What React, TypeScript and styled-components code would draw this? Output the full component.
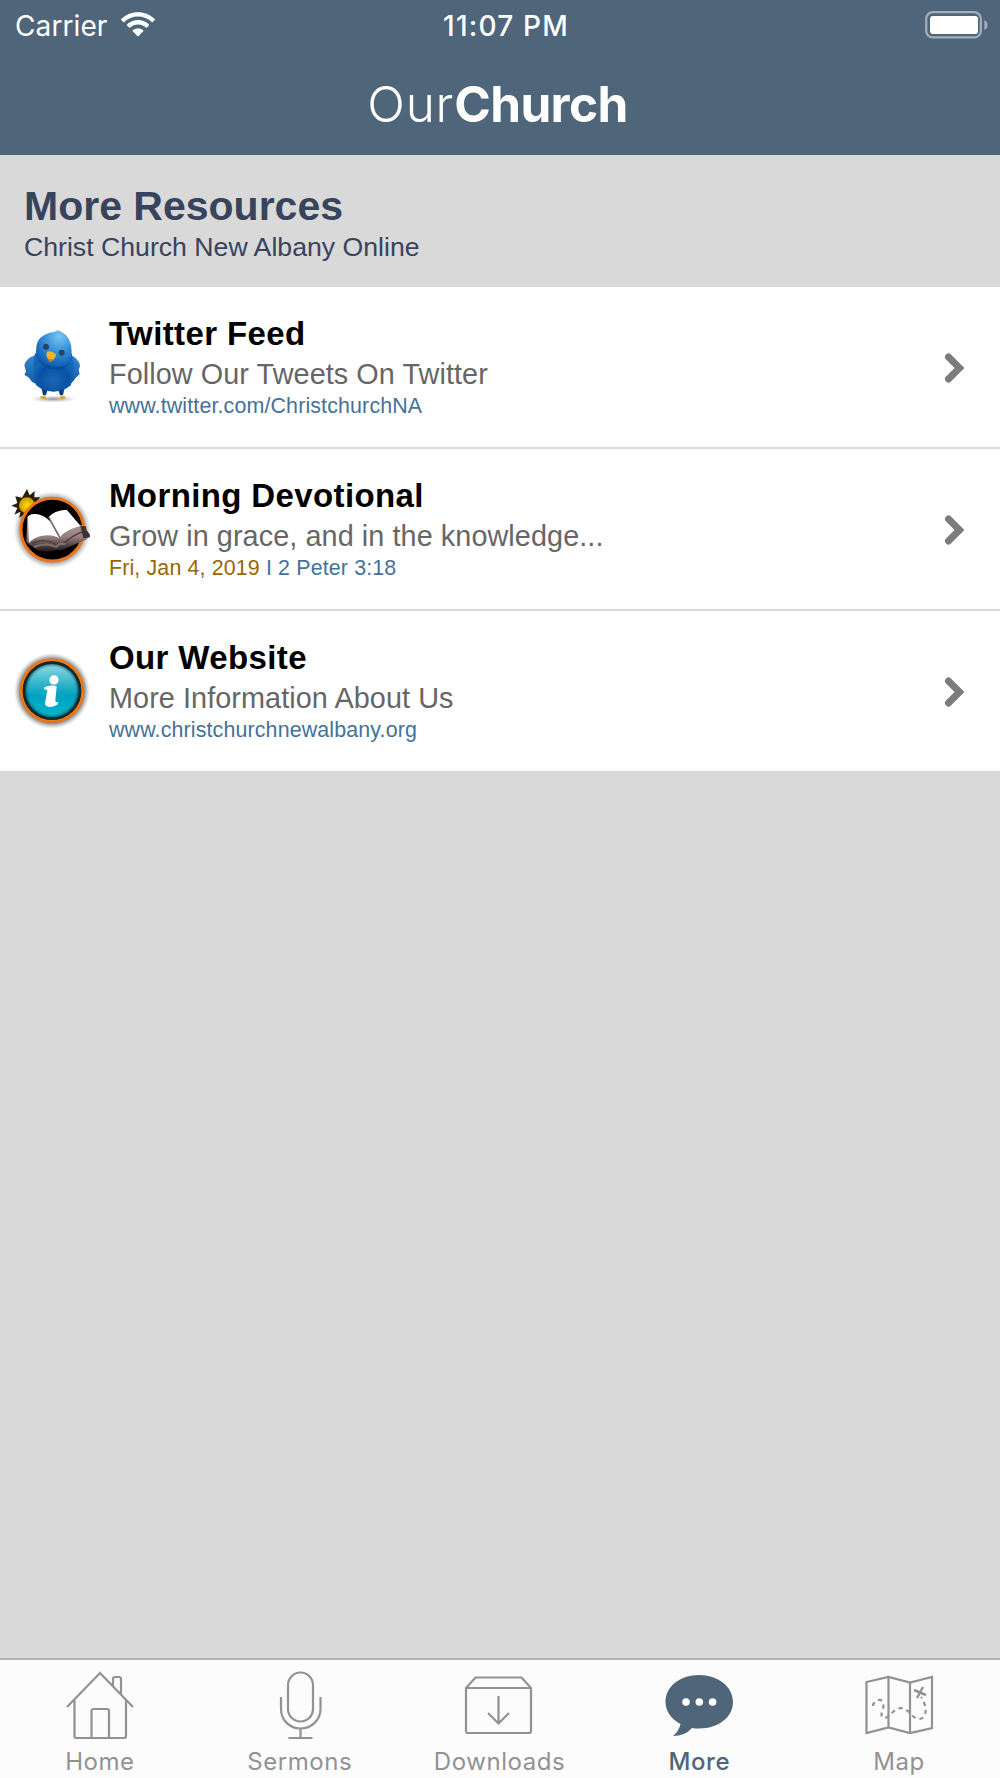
import React from 'react';
import styled, { createGlobalStyle } from 'styled-components';

const GlobalStyle = createGlobalStyle`
    * { box-sizing: border-box; }

    body {
        margin: 0;
        background: #d9d9d9;
        font-family: "Liberation Sans", Arial, sans-serif;
    }
`;

const Screen = styled.div`
    display: flex;
    flex-direction: column;
    width: 1000px;
    height: 1778px;
    background: #d9d9d9;
`;

const Header = styled.header`
    height: 155px;
    background: #4f657a;
    color: #fff;
`;

const StatusBar = styled.div`
    display: grid;
    grid-template-columns: 1fr auto 1fr;
    align-items: center;
    height: 52px;
    padding: 0 12px 0 15px;
    font-family: Inter, sans-serif;
    font-size: 28px;
    line-height: 52px;
`;

const Carrier = styled.div`
    display: flex;
    align-items: center;
    gap: 14px;
    letter-spacing: 0.1px;

    svg { margin-bottom: 3px; }
`;

const Clock = styled.div`
    font-weight: 500;
    letter-spacing: 1.2px;
    padding-left: 9px;
`;

const Battery = styled.svg`
    justify-self: end;
    margin-bottom: 3px;
`;

const Logo = styled.div`
    display: flex;
    justify-content: center;
    align-items: baseline;
    padding: 25px 5px 0 0;
    font-family: Inter, sans-serif;
    font-size: 49.5px;
    line-height: 54px;
`;

const LogoLight = styled.span`
    font-weight: 300;
    letter-spacing: 0.8px;
`;

const LogoBold = styled.span`
    font-weight: 700;
    letter-spacing: -0.6px;
`;

const Heading = styled.section`
    height: 132px;
    padding: 28px 24px 0;
    color: #38435c;
`;

const HeadingTitle = styled.h1`
    margin: 0;
    font-size: 41px;
    line-height: 46px;
`;

const HeadingSubtitle = styled.div`
    font-size: 26.67px;
    line-height: 36px;
`;

const List = styled.div`
    display: flex;
    flex-direction: column;
    gap: 2px;
`;

const Row = styled.a`
    display: flex;
    align-items: center;
    height: 160px;
    padding-right: 35px;
    background: #fff;
`;

const RowIcon = styled.div`
    flex: none;
    width: 109px;
    height: 110px;

    svg { display: block; }
`;

const RowText = styled.div`
    flex: 1;
`;

const RowTitle = styled.div`
    margin-bottom: 2px;
    color: #000;
    font-size: 33px;
    font-weight: 700;
    letter-spacing: 0.38px;
    line-height: 39px;
`;

const RowSubtitle = styled.div`
    color: #666;
    font-size: 28.8px;
    letter-spacing: 0.08px;
    line-height: 38px;
`;

const RowDetail = styled.div`
    color: #43729a;
    font-size: 21.4px;
    letter-spacing: 0.14px;
    line-height: 27px;
`;

const RowDate = styled.span`
    color: #996600;
`;

const TabBar = styled.nav`
    display: grid;
    grid-template-columns: repeat(5, 1fr);
    height: 120px;
    margin-top: auto;
    padding-right: 1px;
    border-top: 2px solid #b2b2b2;
    background: #fcfcfc;
`;

const Tab = styled.div<{ $active?: boolean }>`
    display: flex;
    flex-direction: column;
    align-items: center;
    color: ${props => props.$active ? '#4f657a' : '#929292'};
    font-family: Inter, sans-serif;
    font-size: 24px;
    font-weight: ${props => props.$active ? 500 : 400};
    letter-spacing: 0.55px;
    line-height: 30px;

    svg {
        display: block;
        width: 80px;
        height: 80px;
        margin: 5px 0 2px;
    }
`;

const WifiIcon = () => (
    <svg width="34" height="25" viewBox="0 0 34 25" fill="#fff">
        <path d="M17 .2C23.400 .2 29.500 2.700 33.700 6.900Q34.200 7.500 33.700 8L31.800 9.900Q31.200 10.400 30.700 9.900C27 6.500 22.100 4.600 17 4.600S7 6.500 3.300 9.900Q2.800 10.400 2.200 9.900L.3 8Q-.2 7.500 .3 6.900C4.500 2.700 10.600 .2 17 .2Z" />
        <path d="M17 8C21.200 8 25 9.600 27.900 12.300Q28.500 12.900 27.900 13.500L25.900 15.400Q25.400 15.900 24.800 15.400C22.700 13.500 20 12.400 17 12.400S11.300 13.500 9.200 15.400Q8.600 15.900 8.100 15.400L6.100 13.500Q5.500 12.900 6.100 12.300C9 9.600 12.800 8 17 8Z" />
        <path d="M17 16.400C19 16.400 20.800 17 22.200 18.200Q22.700 18.700 22.200 19.300L17.600 24Q17 24.500 16.400 24L11.800 19.300Q11.300 18.700 11.800 18.200C13.200 17 15 16.400 17 16.400Z" />
    </svg>
);

const BatteryIcon = () => (
    <Battery width="64" height="28" viewBox="0 0 64 28">
        <rect x="2.200" y="1.200" width="54.600" height="25.200" rx="6.500" fill="none" stroke="#a3afba" strokeWidth="2.200" />
        <rect x="6" y="5" width="48" height="18" rx="3" fill="#fff" />
        <path d="M60.300 9V19Q63.500 17.500 63.500 14T60.300 9Z" fill="#a3afba" />
    </Battery>
);

const BirdIcon = () => (
    <svg width="110" height="110" viewBox="0 6 330 330">
        <defs>
            <radialGradient id="birdBody" cx=".5" cy=".7" r=".55">
                <stop offset="0" stopColor="#1d66b2" />
                <stop offset=".65" stopColor="#0852a3" />
                <stop offset="1" stopColor="#1467b5" />
            </radialGradient>
            <radialGradient id="birdHead" cx=".65" cy=".15" r=".85">
                <stop offset="0" stopColor="#7ac5f3" />
                <stop offset=".45" stopColor="#3c94dc" />
                <stop offset="1" stopColor="#0b59ae" />
            </radialGradient>
            <linearGradient id="birdWing" x1="0" y1="0" x2="0" y2="1">
                <stop offset="0" stopColor="#3a87c9" />
                <stop offset="1" stopColor="#115cab" />
            </linearGradient>
            <radialGradient id="birdShadow">
                <stop offset="0" stopColor="#777" stopOpacity=".8" />
                <stop offset="1" stopColor="#aaa" stopOpacity="0" />
            </radialGradient>
        </defs>
        <ellipse cx="160" cy="267" rx="70" ry="11" fill="url(#birdShadow)" />
        <path d="M124 232L129 256H138L143 238ZM194 232L189 256H180L175 238Z" fill="#0a3d78" />
        <path d="M120 263Q122 255 129 259Q135 253 139 267Q130 271 120 263ZM179 267Q182 253 188 259Q195 255 197 263Q190 271 179 267Z" fill="#d6a62e" />
        <path d="M108 134Q76 145 73 166L78 184L73 194L88 204Q94 219 112 222ZM210 134Q237 145 240 168L236 180L239 192L226 205Q220 219 203 222Z" fill="url(#birdWing)" />
        <path d="M105 130H215Q230 190 212 226Q194 243 161 245Q127 243 108 225Q93 188 105 130Z" fill="url(#birdBody)" />
        <path d="M108 127Q106 88 134 74Q151 65 164 66Q171 58 184 65Q214 80 215 124Q214 171 164 174Q113 172 108 127Z" fill="url(#birdHead)" />
        <path d="M112 148Q133 182 174 178Q203 174 212 151Q204 171 171 171Q134 171 112 148Z" fill="#08498f" opacity=".7" />
        <circle cx="138" cy="110" r="9" fill="#25455f" />
        <circle cx="185" cy="128" r="9" fill="#25455f" />
        <path d="M141 125Q153 121 167 132Q169 141 160 149L150 157Q142 148 139 135Z" fill="#f4b526" />
        <path d="M142 143Q151 150 161 147L150 157Z" fill="#c87b13" />
    </svg>
);

const BookIcon = () => (
    <svg width="110" height="110" viewBox="2 -3 330 330">
        <defs>
            <radialGradient id="bookGlow">
                <stop offset=".82" stopColor="#444" stopOpacity=".55" />
                <stop offset="1" stopColor="#888" stopOpacity="0" />
            </radialGradient>
            <linearGradient id="bookCover" x1="0" y1="0" x2="0" y2="1">
                <stop offset="0" stopColor="#c4b4b1" />
                <stop offset=".65" stopColor="#94807d" />
                <stop offset="1" stopColor="#1d1615" />
            </linearGradient>
            <radialGradient id="sun">
                <stop offset="0" stopColor="#ffe000" />
                <stop offset="1" stopColor="#c99a00" />
            </radialGradient>
        </defs>
        <circle cx="159" cy="165" r="116" fill="url(#bookGlow)" />
        <path d="M83 42L91 61L106 48L105 67L123 67L110 82L122 97L104 102L96 116L83 111L60 129L63 110L45 119L54 99L36 92L54 84L48 64L68 68Z" fill="#2b1f0b" />
        <circle cx="83" cy="91" r="24" fill="url(#sun)" />
        <circle cx="159" cy="164" r="94" fill="#000" stroke="#eb7417" strokeWidth="9" />
        <path d="M84 125Q99 114 116 118Q137 123 151 137Q166 110 199 105L242 149L258 155L263 166L272 181L262 193L195 222Q181 228 172 224Q149 234 115 227L81 202Z" fill="url(#bookCover)" />
        <path d="M86 124Q99 113 118 119Q138 124 151 139L180 190Q161 177 128 182Q104 187 89 203Z" fill="#fff" />
        <path d="M148 126Q163 107 202 104Q219 123 242 153Q225 158 211 164Q188 175 182 188Z" fill="#fff" />
        <path d="M148 126L182 188" stroke="#756263" strokeWidth="4" />
        <path d="M98 205Q133 188 168 207M190 210Q213 182 260 166" fill="none" stroke="#4b3a38" strokeWidth="4" />
        <path d="M104 216Q143 201 170 216L181 207L198 207" fill="none" stroke="#817272" strokeWidth="6" />
        <path d="M243 153L260 154L261 165L271 178L272 187L252 190L249 177Z" fill="#403233" />
    </svg>
);

const InfoIcon = () => (
    <svg width="110" height="110" viewBox="1 -12 330 330">
        <defs>
            <radialGradient id="infoGlow">
                <stop offset=".83" stopColor="#333" stopOpacity=".65" />
                <stop offset="1" stopColor="#888" stopOpacity="0" />
            </radialGradient>
            <linearGradient id="infoFill" x1="0" y1="0" x2="0" y2="1">
                <stop offset="0" stopColor="#8ed8e4" />
                <stop offset=".45" stopColor="#20adc4" />
                <stop offset=".6" stopColor="#00a2bf" />
                <stop offset="1" stopColor="#06b5cf" />
            </linearGradient>
            <radialGradient id="infoEdge">
                <stop offset=".8" stopColor="#063d4b" stopOpacity="0" />
                <stop offset="1" stopColor="#092127" />
            </radialGradient>
        </defs>
        <circle cx="157" cy="153" r="114" fill="url(#infoGlow)" />
        <circle cx="157" cy="152" r="92" fill="#183038" stroke="#f37510" strokeWidth="9" />
        <circle cx="157" cy="152" r="80" fill="url(#infoFill)" />
        <circle cx="157" cy="152" r="88" fill="url(#infoEdge)" />
        <circle cx="163" cy="120" r="14" fill="#fff" />
        <path d="M134 142Q150 134 171 138L167 181Q167 188 175 187V193Q158 205 142 199Q134 195 137 185L143 151Q142 148 134 149Z" fill="#fff" />
    </svg>
);

const Chevron = () => (
    <svg width="22" height="32" viewBox="0 0 22 32">
        <path d="M5.500 6L16.500 17L5.500 28" fill="none" stroke="#7c7c7c" strokeWidth="7" strokeLinecap="round" />
    </svg>
);

const HomeIcon = () => (
    <svg viewBox="0 0 80 80" fill="none" stroke="currentColor" strokeWidth="2.200">
        <path d="M7 42L40 8L73 42M14.500 35V71Q14.500 73 16.500 73H64Q66 73 66 71V35M31.500 73V46Q31.500 44 33.500 44H47Q49 44 49 46V73M53 21V14Q53 12 55 12H59Q61 12 61 14V29" />
    </svg>
);

const MicIcon = () => (
    <svg viewBox="0 0 80 80" fill="none" stroke="currentColor" strokeWidth="2.200">
        <rect x="28" y="7.500" width="25" height="49" rx="12.500" />
        <path d="M21 32V44C21 55 29.500 63.500 40.500 63.500S60.500 55 60.500 44V32M40.500 64V73M28.500 73H52.500" />
    </svg>
);

const DownloadIcon = () => (
    <svg viewBox="0 0 80 80" fill="none" stroke="currentColor" strokeWidth="2.200">
        <path d="M7 23L16.500 12.500H62.500L72 23V66Q72 68 70 68H9Q7 68 7 66ZM7 23H72M39.500 31V58M29 48L39.500 58.500L50 48" />
    </svg>
);

const MoreIcon = () => (
    <svg viewBox="0 0 80 80">
        <path d="M40 10C59 10 74 21.500 74 37S59 63.500 40 63.500Q36 63.500 33 63Q26 71 14 71Q20 66 21.500 59C12 54 6.500 46 6.500 37C6.500 21.500 21 10 40 10Z" fill="currentColor" />
        <circle cx="27" cy="37" r="3.800" fill="#fff" />
        <circle cx="40.300" cy="37" r="3.800" fill="#fff" />
        <circle cx="53.600" cy="37" r="3.800" fill="#fff" />
    </svg>
);

const MapIcon = () => (
    <svg viewBox="0 0 80 80" fill="none" stroke="currentColor" strokeWidth="2.200">
        <path d="M7.500 17L29.500 12L51 17.500L73 12V63L51 68L29.500 62.500L7.500 68ZM29.500 12V62.500M51 17.500V68" />
        <path d="M14 41C14 35 24 32 24.500 39C25 45 20 50 24 53C31 54 33 44 42 43C50 43 53 54 60 54C69 54 68 40 62 32" strokeDasharray="4.200 4" />
        <path d="M55 25L67 30M64 22L58 33" strokeWidth="2.500" />
    </svg>
);

const tabs = [
    { label: 'Home', icon: <HomeIcon /> },
    { label: 'Sermons', icon: <MicIcon /> },
    { label: 'Downloads', icon: <DownloadIcon /> },
    { label: 'More', icon: <MoreIcon />, active: true },
    { label: 'Map', icon: <MapIcon /> },
];

type ResourceRowProps = {
    icon: React.ReactNode;
    title: string;
    subtitle: string;
    detail: React.ReactNode;
};

const ResourceRow: React.FC<ResourceRowProps> = ({ icon, title, subtitle, detail }) => (
    <Row>
        <RowIcon>{icon}</RowIcon>
        <RowText>
            <RowTitle>{title}</RowTitle>
            <RowSubtitle>{subtitle}</RowSubtitle>
            <RowDetail>{detail}</RowDetail>
        </RowText>
        <Chevron />
    </Row>
);

const App: React.FC = () => (
    <Screen>
        <GlobalStyle />
        <Header>
            <StatusBar>
                <Carrier>
                    Carrier
                    <WifiIcon />
                </Carrier>
                <Clock>11:07 PM</Clock>
                <BatteryIcon />
            </StatusBar>
            <Logo>
                <LogoLight>Our</LogoLight>
                <LogoBold>Church</LogoBold>
            </Logo>
        </Header>
        <Heading>
            <HeadingTitle>More Resources</HeadingTitle>
            <HeadingSubtitle>Christ Church New Albany Online</HeadingSubtitle>
        </Heading>
        <List>
            <ResourceRow
                icon={<BirdIcon />}
                title="Twitter Feed"
                subtitle="Follow Our Tweets On Twitter"
                detail="www.twitter.com/ChristchurchNA"
            />
            <ResourceRow
                icon={<BookIcon />}
                title="Morning Devotional"
                subtitle="Grow in grace, and in the knowledge..."
                detail={<><RowDate>Fri, Jan 4, 2019</RowDate> I 2 Peter 3:18</>}
            />
            <ResourceRow
                icon={<InfoIcon />}
                title="Our Website"
                subtitle="More Information About Us"
                detail="www.christchurchnewalbany.org"
            />
        </List>
        <TabBar>
            {tabs.map(tab => (
                <Tab key={tab.label} $active={tab.active}>
                    {tab.icon}
                    {tab.label}
                </Tab>
            ))}
        </TabBar>
    </Screen>
);

export default App;
